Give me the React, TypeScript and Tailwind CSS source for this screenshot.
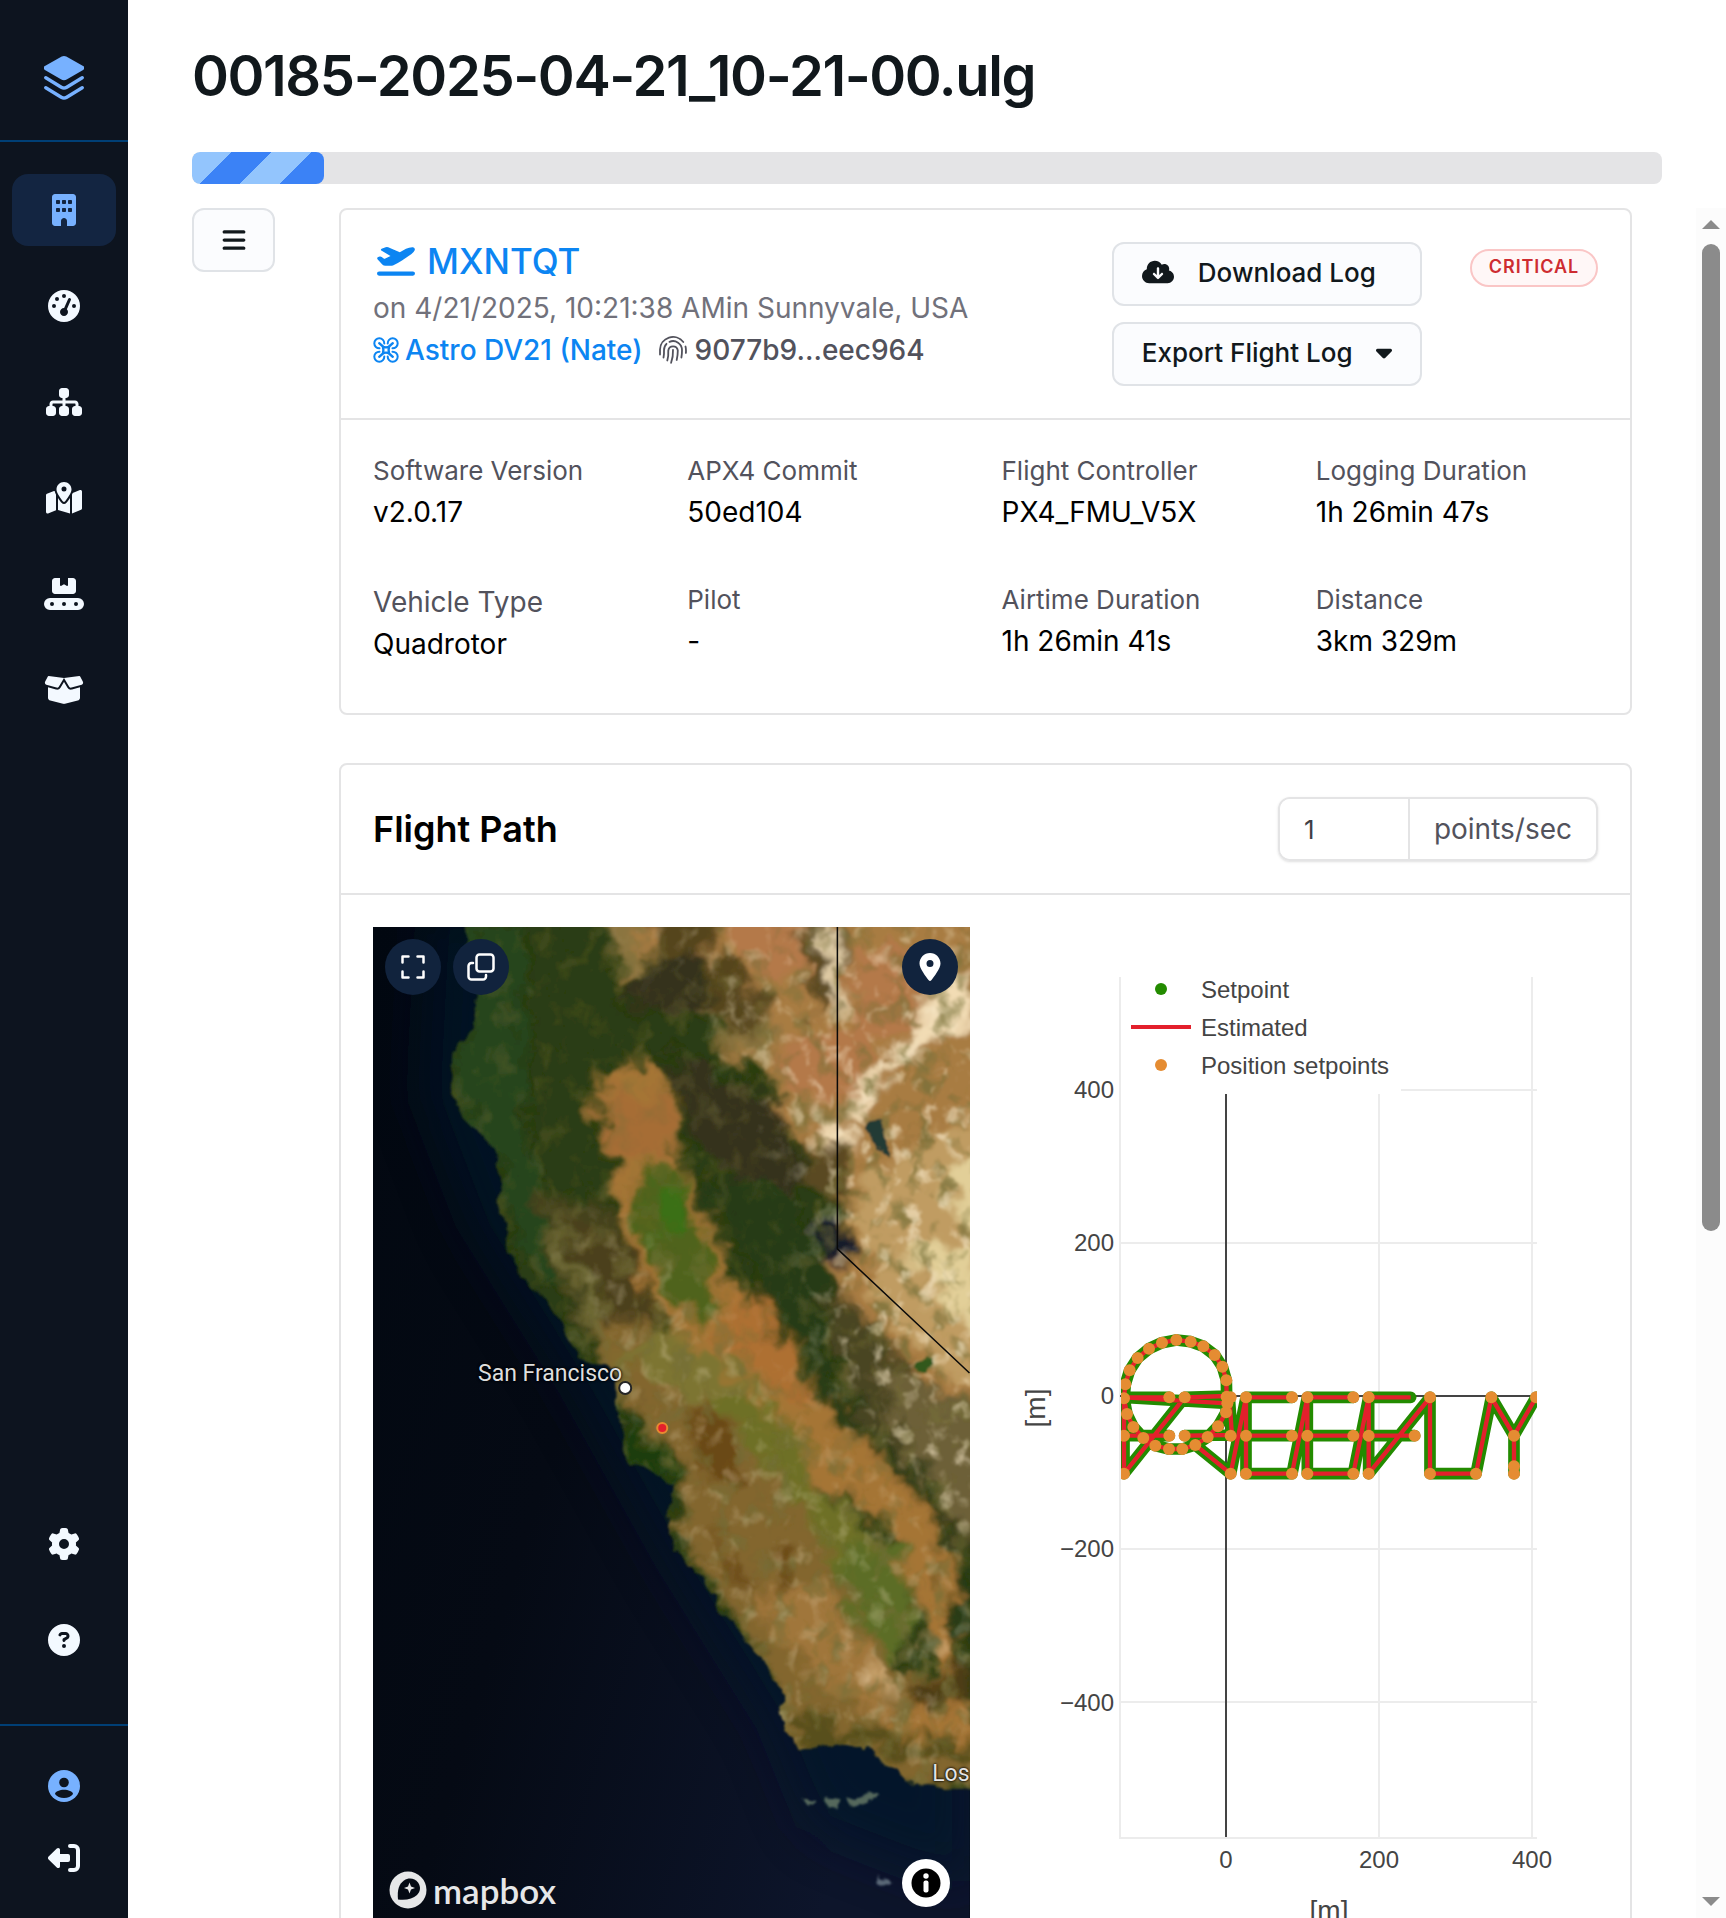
import type { ReactNode } from "react";
import {
  FaBars,
  FaBoxOpen,
  FaBuilding,
  FaCaretDown,
  FaCircleQuestion,
  FaCloudArrowDown,
  FaGaugeHigh,
  FaGear,
  FaLocationDot,
  FaMapLocationDot,
  FaSitemap,
} from "react-icons/fa6";

function LogoIcon() {
  return (
    <svg width="40" height="44" viewBox="0 0 40 44" fill="none" aria-hidden="true">
      <path
        d="M17.700.6a5 5 0 0 1 4.600 0l16.800 9.400a2.200 2.200 0 0 1 0 3.900l-16 9.300a6 6 0 0 1-6.200 0L.9 13.900a2.200 2.200 0 0 1 0-3.900z"
        fill="#77b1ff"
      />
      <path
        d="M1.800 21.700 17.300 31.200a5 5 0 0 0 5.400 0L38.200 21.700M1.800 31.700 17.300 41.200a5 5 0 0 0 5.400 0L38.200 31.700"
        stroke="#77b1ff"
        strokeWidth="3.400"
        strokeLinecap="round"
      />
    </svg>
  );
}

function ConveyorIcon() {
  return (
    <svg width="40" height="32" viewBox="0 0 640 512" fill="currentColor" aria-hidden="true">
      <path d="M176 0h80v112c0 12 12 19 22 12l42-26 42 26c10 7 22 0 22-12V0h80c26 0 48 22 48 48v160c0 26-22 48-48 48H176c-26 0-48-22-48-48V48c0-26 22-48 48-48z" />
      <path
        fillRule="evenodd"
        d="M96 320h448a96 96 0 0 1 0 192H96a96 96 0 0 1 0-192zm32 64a32 32 0 1 0 0 64 32 32 0 0 0 0-64zm192 0a32 32 0 1 0 0 64 32 32 0 0 0 0-64zm192 0a32 32 0 1 0 0 64 32 32 0 0 0 0-64z"
      />
    </svg>
  );
}

function UserIcon() {
  return (
    <svg width="32" height="32" viewBox="0 0 32 32" aria-hidden="true">
      <circle cx="16" cy="16" r="16" fill="#77b1ff" />
      <circle cx="16" cy="12.500" r="4.800" fill="#0d141f" />
      <path d="M7 24c0-2.600 5-4.200 9-4.200s9 1.600 9 4.200c-2 2.600-5 3.900-9 3.900S9 26.600 7 24z" fill="#0d141f" />
    </svg>
  );
}

function LogoutIcon() {
  return (
    <svg width="32" height="32" viewBox="0 0 32 32" fill="none" aria-hidden="true">
      <path
        d="M.6 14.600 8.800 6.500C10 5.300 12 6 12 7.800V12h8a2 2 0 0 1 2 2v4a2 2 0 0 1-2 2h-8v4.200c0 1.800-2 2.500-3.200 1.300L.6 17.400a2 2 0 0 1 0-2.800z"
        fill="currentColor"
      />
      <path d="M22 4h4a4 4 0 0 1 4 4v16a4 4 0 0 1-4 4h-4" stroke="currentColor" strokeWidth="4" strokeLinecap="round" />
    </svg>
  );
}

function TakeoffIcon() {
  return (
    <svg width="38" height="29" viewBox="0 0 38 29" fill="currentColor" aria-hidden="true">
      <path d="M4.600 1.800 8.600.3a3.500 3.500 0 0 1 2.600 0l11.600 4.900L29 1.800Q32.500 0 36 .2q2.400.6 1.700 3Q37 5 34.500 7L25 13.600q-4.500 3-9 4.800-1.400.4-3 .4H8.500q-2 0-3.200-1.300L.5 12.200Q-.4 10.600 1.200 10l1.600-.4q1-.2 1.900.4l2 1.500q.8.4 1.600 0L13.500 9 4.300 3.600q-1-1.100.3-1.800z" />
      <rect y="24.500" width="38" height="4.200" rx="2.100" />
    </svg>
  );
}

function DroneIcon() {
  return (
    <svg width="26" height="26" viewBox="0 0 26 26" fill="none" stroke="currentColor" strokeWidth="2" strokeLinecap="round" strokeLinejoin="round" aria-hidden="true">
      <path d="M11.300 6.500A5 5 0 1 0 6.500 11.300M14.700 6.500A5 5 0 1 1 19.500 11.300M11.300 19.500A5 5 0 1 1 6.500 14.700M14.700 19.500A5 5 0 1 0 19.500 14.700" />
      <path d="M6.200 6.200 10.500 10Q13 10.800 15.500 10L19.800 6.200M6.200 19.800 10.500 16Q13 15.200 15.500 16L19.800 19.800M10 10.500Q10.800 13 10 15.500M16 10.500Q15.200 13 16 15.500" strokeWidth="2.400" />
    </svg>
  );
}

function FingerprintIcon() {
  return (
    <svg width="28" height="28" viewBox="0 0 28 28" fill="none" stroke="currentColor" strokeWidth="1.800" strokeLinecap="round" aria-hidden="true">
      <path d="M1 18.500v-5a13 13 0 0 1 23.300-7.500M26.500 10.500q.7 2.500.4 6.500" />
      <path d="M4.500 21.500q.7-3 .5-7a9 9 0 0 1 2.500-6.700M10.500 5.800a9 9 0 0 1 12.500 8.500q0 4-.6 7.200" />
      <path d="M8.300 24.500q1.300-4.500 1-10a4.800 4.800 0 0 1 9.500 0q0 5-1.100 9.500" />
      <path d="M14 13.800q.3 7-1.900 13" />
    </svg>
  );
}

function NavLink({ label, active, children }: { label: string; active?: boolean; children: ReactNode }) {
  return (
    <a
      href="#"
      aria-label={label}
      className={
        active
          ? "flex h-[72px] items-center justify-center rounded-2xl bg-[#132541] text-[#77b1ff]"
          : "flex h-[72px] items-center justify-center rounded-2xl text-[#f3f9ff]"
      }
    >
      {children}
    </a>
  );
}

function Sidebar() {
  return (
    <aside className="flex w-32 shrink-0 flex-col bg-[#0d141f]">
      <a href="#" aria-label="Home" className="flex h-[142px] shrink-0 items-center justify-center border-b-2 border-[#003f75] pt-4">
        <LogoIcon />
      </a>
      <nav aria-label="Main" className="flex flex-1 flex-col gap-6 px-3 pt-8">
        <NavLink label="Organization" active><FaBuilding size={32} /></NavLink>
        <NavLink label="Dashboard"><FaGaugeHigh size={32} /></NavLink>
        <NavLink label="Fleet"><FaSitemap className="h-8 w-9" /></NavLink>
        <NavLink label="Missions"><FaMapLocationDot className="h-8 w-9" /></NavLink>
        <NavLink label="Production"><ConveyorIcon /></NavLink>
        <NavLink label="Packages"><FaBoxOpen className="h-8 w-10" /></NavLink>
      </nav>
      <nav aria-label="Support" className="flex flex-col gap-6 px-3 pb-12">
        <NavLink label="Settings"><FaGear size={32} /></NavLink>
        <NavLink label="Help"><FaCircleQuestion size={32} /></NavLink>
      </nav>
      <nav aria-label="Account" className="flex h-[194px] flex-col items-center gap-10 border-t-2 border-[#003f75] pt-11 text-[#f3f9ff]">
        <a href="#" aria-label="Profile"><UserIcon /></a>
        <a href="#" aria-label="Log out"><LogoutIcon /></a>
      </nav>
    </aside>
  );
}

function Field({ label, value, large }: { label: string; value: string; large?: boolean }) {
  return (
    <div>
      <dt className={large ? "text-[28px] leading-[42px] text-zinc-600" : "mb-0.5 text-[26px] leading-[37px] text-zinc-600"}>{label}</dt>
      <dd className="text-[28px] leading-[42px] text-black">{value}</dd>
    </div>
  );
}

function SummaryCard() {
  return (
    <section className="rounded-lg border-2 border-[#e4e4e5]">
      <header className="flex items-start border-b-2 border-[#e4e4e5] p-8">
        <div className="min-w-0 flex-1">
          <h2 className="mb-[7px] text-[35px] leading-[38px] font-medium text-[#0c85f2]">
            <a href="#" className="flex items-center gap-3 pl-1">
              <TakeoffIcon />
              MXNTQT
            </a>
          </h2>
          <p className="text-[28px] leading-[42px] text-zinc-500">on 4/21/2025, 10:21:38 AMin Sunnyvale, USA</p>
          <p className="flex items-center text-[28px] leading-[42px] font-medium">
            <a href="#" className="flex items-center gap-1.5 text-[#0c85f2]">
              <DroneIcon />
              Astro DV21 (Nate)
            </a>
            <span className="ml-4 flex items-center gap-2 text-zinc-600">
              <FingerprintIcon />
              9077b9...eec964
            </span>
          </p>
        </div>
        <div className="mr-12 flex w-[310px] flex-col gap-4">
          <button className="flex h-16 items-center gap-6 rounded-xl border-2 border-[#e0e3e7] bg-[#fbfcfe] px-7 pb-1 text-[26px] font-medium whitespace-nowrap text-[#11181c]">
            <FaCloudArrowDown className="h-[26px] w-8" />
            Download Log
          </button>
          <button className="flex h-16 items-center justify-between rounded-xl border-2 border-[#e0e3e7] bg-[#fbfcfe] px-7 pb-1 text-[26px] font-medium whitespace-nowrap text-[#11181c]">
            Export Flight Log
            <FaCaretDown className="h-[26px] w-4" />
          </button>
        </div>
        <span className="mt-[7px] flex h-[38px] items-center rounded-full border-2 border-[#fac6c6] bg-[#fff7f7] px-[17px] pb-0.5 text-lg font-semibold tracking-wider text-[#ce2c31]">
          CRITICAL
        </span>
      </header>
      <dl className="grid grid-cols-4 gap-x-8 gap-y-12 px-8 pt-8 pb-12">
        <Field label="Software Version" value="v2.0.17" />
        <Field label="APX4 Commit" value="50ed104" />
        <Field label="Flight Controller" value="PX4_FMU_V5X" />
        <Field label="Logging Duration" value="1h 26min 47s" />
        <Field label="Vehicle Type" value="Quadrotor" large />
        <Field label="Pilot" value="-" />
        <Field label="Airtime Duration" value="1h 26min 41s" />
        <Field label="Distance" value="3km 329m" />
      </dl>
    </section>
  );
}

const coast =
  "M94 0 92 33 104 70 100 96 81 133 77 166 98 196 121 223 131 256 127 283 133 306 139 336 164 366 191 396 207 430 238 440 244 460 246 494 256 532 277 549 304 556 295 597 300 625 328 649 343 676 370 707 398 745 407 762 407 782 415 810 429 824 464 817 499 824 522 841 534 858 557 858 620 868V-20H94z";

function SatelliteImage() {
  return (
    <svg className="absolute inset-0 h-full w-full" viewBox="0 0 596 992" preserveAspectRatio="xMidYMid slice" aria-hidden="true">
      <defs>
        <linearGradient id="sea" x1="0" y1="0" x2="1" y2="0.500">
          <stop offset="0" stopColor="#020811" />
          <stop offset="0.450" stopColor="#050a14" />
          <stop offset="1" stopColor="#0d152b" />
        </linearGradient>
        <linearGradient id="desertFade" gradientUnits="userSpaceOnUse" x1="250" y1="0" x2="480" y2="260">
          <stop offset="0" stopColor="#555" />
          <stop offset="1" stopColor="#fff" />
        </linearGradient>
        <filter id="shelf" x="-20%" y="-20%" width="140%" height="140%">
          <feGaussianBlur stdDeviation="26" />
        </filter>
        <filter id="rough" x="-10%" y="-10%" width="120%" height="120%">
          <feTurbulence type="fractalNoise" baseFrequency="0.045" numOctaves="4" seed="7" result="n" />
          <feDisplacementMap in="SourceGraphic" in2="n" scale="16" xChannelSelector="R" yChannelSelector="G" />
          <feGaussianBlur stdDeviation="1" />
        </filter>
        <filter id="terrain" x="-10%" y="-10%" width="120%" height="120%">
          <feGaussianBlur stdDeviation="5" result="b" />
          <feTurbulence type="fractalNoise" baseFrequency="0.035" numOctaves="5" seed="12" result="n" />
          <feDisplacementMap in="b" in2="n" scale="46" xChannelSelector="R" yChannelSelector="G" />
          <feGaussianBlur stdDeviation="1" />
        </filter>
        <filter id="darkGrain" x="0" y="0" width="100%" height="100%">
          <feTurbulence type="fractalNoise" baseFrequency="0.050 0.040" numOctaves="4" seed="3" />
          <feColorMatrix values="0 0 0 0 0.180  0 0 0 0 0.160  0 0 0 0 0.040  3.500 0 0 0 -1.750" />
        </filter>
        <filter id="lightGrain" x="0" y="0" width="100%" height="100%">
          <feTurbulence type="fractalNoise" baseFrequency="0.060 0.050" numOctaves="4" seed="21" />
          <feColorMatrix values="0 0 0 0 0.930  0 0 0 0 0.810  0 0 0 0 0.580  0 4 0 0 -2.200" />
        </filter>
        <clipPath id="land">
          <path d={coast} />
        </clipPath>
        <mask id="desertMask">
          <path d="M235 -10H620V620L560 600 500 500 462 440 440 360 462 300 430 240 395 190 340 130 335 80 320 30 260 40z" fill="url(#desertFade)" filter="url(#shelf)" />
        </mask>
        <mask id="southMask">
          <path d="M170 290 250 300 330 360 420 480 560 620 620 700V870H400L290 600 230 450z" fill="#fff" filter="url(#shelf)" />
        </mask>
      </defs>
      <rect width="596" height="992" fill="url(#sea)" />
      <path d="M60 -20 50 170 100 300 200 460 300 640 400 800 440 900 596 960V700L200 0z" fill="#06142a" filter="url(#shelf)" opacity="0.700" />
      <g filter="url(#rough)">
        <g transform="translate(-1 -1)">
          <path d={coast} fill="#2a3c12" />
          <g clipPath="url(#land)">
            <g filter="url(#terrain)">
              <path d="M94 0 92 33 104 70 81 133 77 166 98 196 131 256 150 336 190 366 160 220 150 110 160 0z" fill="#25441a" />
              <path d="M245 80 340 90 330 20 300 10zM290 130 400 170 430 250 400 300 320 210z" fill="#34301c" />
              <path d="M230 -20H620V640L580 560 540 480 500 460 470 400 452 340 478 320 470 250 410 200 405 160 345 120 345 40 300 10 250 60z" fill="#a87c42" />
              <path d="M235 -20 265 -20 265 50 245 40zM330 80 400 90 400 130 350 120z" fill="#8b7540" />
              <path d="M270 -20H345V20L300 30zM335 30 370 40 380 110 340 100z" fill="#55451f" />
              <path d="M350 -10H440L430 60 370 40zM410 110 520 90 480 180 420 170zM480 20 560 20 540 100 480 110z" fill="#b4794a" />
              <path d="M430 0 470 0 475 60 440 90zM360 60 400 70 390 110zM430 210 470 230 470 280 430 260z" fill="#5a4a22" />
              <path d="M480 260 620 180V480L560 430 500 370z" fill="#c09c62" />
              <path d="M430 180 480 205 480 230 460 225zM590 30 600 90 530 140 500 165 490 195 478 190 485 160 530 120 560 60zM448 0h10l16 70-12 10z" fill="#f2dcb4" />
              <path d="M575 240 620 220 620 320 580 290zM540 330 600 310 610 420 570 380z" fill="#e2cf98" />
              <path d="M450 350 530 430 620 520V640L520 560 470 460z" fill="#4a4420" />
              <path d="M500 440 620 480V620L580 590 530 520z" fill="#6d6038" />
              <path d="M340 260 400 250 450 330 450 450 560 560 600 700 570 720 490 520 410 400z" fill="#263a15" />
              <path d="M445 300 470 295 478 335 450 335z" fill="#151d2c" />
              <path d="M180 290 240 300 290 410 350 440 450 560 530 740 596 780 620 860H400L395 740 330 640 300 600 310 550 250 470 210 400z" fill="#83662e" />
              <path d="M160 270 240 280 265 390 205 400z" fill="#44431b" />
              <path d="M190 290 260 320 285 390 240 400z" fill="#4b411a" />
              <path d="M178 285 190 300 225 380 240 430 222 410 195 345z" fill="#6f6a35" />
              <path d="M222 165 270 130 300 160 303 225 335 275 350 330 368 370 400 380 425 450 480 500 540 560 575 620 580 690 596 740V830H500L560 740 520 600 440 560 360 470 320 440 285 380 265 340 245 290 235 220z" fill="#a57434" />
              <path d="M230 170 295 172 296 225 270 240 240 230z" fill="#a66d36" />
              <path d="M268 245 310 240 330 300 345 360 330 410 300 370 275 330 262 300z" fill="#50641a" />
              <path d="M285 260 310 265 315 300 285 310z" fill="#3b7018" />
              <path d="M350 370 395 375 420 430 450 480 400 460 355 430z" fill="#ae7030" />
              <path d="M240 430 300 410 370 450 400 500 330 480z" fill="#7d7430" />
              <path d="M380 460 425 510 450 570 520 620 535 700 520 740 480 660 430 590 395 540 340 480z" fill="#6e7028" />
              <path d="M470 620 530 620 540 690 520 740 480 690z" fill="#5c6d27" />
              <path d="M310 480 350 490 370 550 340 560zM400 620 430 640 410 660zM330 580 380 660 370 670z" fill="#6b4818" />
              <path d="M390 660 460 660 500 740 520 800 470 770 400 710z" fill="#a0763a" />
              <path d="M248 485 275 500 315 550 300 556 256 532z" fill="#1f3d10" />
              <path d="M410 790 450 790 520 810 600 810 600 835 430 825z" fill="#59501b" />
              <path d="M540 760 600 730 600 770 540 790z" fill="#4d3d16" />
              <path d="M485 720 520 760 530 775 505 760zM535 720 580 715 580 725z" fill="#d8b27c" />
            </g>
            <rect width="620" height="992" filter="url(#darkGrain)" opacity="0.300" />
            <g mask="url(#southMask)">
              <rect width="620" height="992" filter="url(#darkGrain)" opacity="0.600" />
              <rect width="620" height="992" filter="url(#lightGrain)" opacity="0.250" />
            </g>
            <g mask="url(#desertMask)">
              <rect width="620" height="992" filter="url(#darkGrain)" opacity="0.600" />
              <rect width="620" height="992" filter="url(#lightGrain)" opacity="0.650" />
            </g>
          </g>
        </g>
        <path d="M492 198q12-14 18 2 2 18 10 28-14-4-20-12z" fill="#243a35" />
        <path d="M540 433q10-10 18 2l-6 12q-10 2-12-14z" fill="#31581f" />
        <path d="M430 868l12 4-4 6zM452 872l18 2-4 10-12-2zM478 868l28 2-4 8-22-2z" fill="#54685c" />
        <path d="M504 948l12 8-6 4z" fill="#5a6877" />
      </g>
      <path d="M464 0V322L596 446" fill="none" stroke="#090909" strokeWidth="1.500" />
      <circle cx="252" cy="461" r="6" fill="#fff" stroke="#252525" strokeWidth="2" />
      <circle cx="289" cy="501" r="5" fill="#e4202c" stroke="#e88a30" strokeWidth="2" />
    </svg>
  );
}

function RoundButton({ label, children }: { label: string; children: ReactNode }) {
  return (
    <button aria-label={label} className="flex size-14 items-center justify-center rounded-full bg-[#11233d] text-white">
      {children}
    </button>
  );
}

function FlightMap() {
  return (
    <div className="relative h-[992px] overflow-hidden bg-[#040a14]">
      <SatelliteImage />
      <div className="absolute inset-x-3 top-3 flex gap-3">
        <RoundButton label="Full screen">
          <svg width="24" height="24" viewBox="0 0 24 24" fill="none" stroke="currentColor" strokeWidth="2.500" strokeLinecap="round" strokeLinejoin="round" aria-hidden="true">
            <path d="M1.500 7.500v-6h6M16.500 1.500h6v6M22.500 16.500v6h-6M7.500 22.500h-6v-6" />
          </svg>
        </RoundButton>
        <RoundButton label="Copy">
          <svg width="28" height="28" viewBox="0 0 28 28" fill="none" stroke="currentColor" strokeWidth="2.500" strokeLinecap="round" aria-hidden="true">
            <rect x="9.500" y="1.500" width="17" height="17" rx="3" />
            <path d="M6 10H4.500a3 3 0 0 0-3 3v10.500a3 3 0 0 0 3 3H16a3 3 0 0 0 3-3V22" />
          </svg>
        </RoundButton>
        <span className="flex-1" />
        <RoundButton label="Center on vehicle"><FaLocationDot size={28} /></RoundButton>
      </div>
      <span className="absolute top-[433px] left-[105px] font-[Roboto] text-[23px] leading-7 text-[#dedede] [text-shadow:0_0_3px_#000,0_0_2px_#000]">San Francisco</span>
      <span className="absolute top-[833px] right-0 font-[Roboto] text-[23px] leading-7 text-[#e4e4e4] [text-shadow:0_0_3px_#000,0_0_2px_#000]">Los</span>
      <a href="#" className="absolute bottom-2 left-4 flex items-center gap-1.5 text-[#e6e7e8]">
        <svg width="38" height="38" viewBox="0 0 38 38" aria-hidden="true">
          <circle cx="19" cy="19" r="18.500" fill="currentColor" />
          <path d="M9 28.500C8 19 10 13 15 9.500c5-3.500 11-2 14 2s2.500 9-1 12.500c-4 4-11 5.500-19 4.500z" fill="#040a14" />
          <path d="m20.500 11.500 1.500 4 4 1.500-4 1.500-1.500 4-1.500-4-4-1.500 4-1.500z" fill="currentColor" />
        </svg>
        <span className="font-[Lato] text-[35px] leading-[42px] font-semibold">mapbox</span>
      </a>
      <button aria-label="Attribution" className="absolute right-5 bottom-3 flex size-12 items-center justify-center rounded-full bg-white">
        <svg width="30" height="30" viewBox="0 0 30 30" aria-hidden="true">
          <circle cx="15" cy="15" r="14.500" />
          <circle cx="15" cy="8" r="2.700" fill="#fff" />
          <rect x="12.500" y="12.500" width="5" height="12" rx="2" fill="#fff" />
        </svg>
      </button>
    </div>
  );
}

const circlePoints: [number, number][] = [
  [76, 223], [89, 181], [113, 144], [147, 116], [186, 98], [229, 90], [272, 95], [310, 109],
  [344, 135], [367, 170], [379, 211], [380, 260], [378, 307], [354, 349], [323, 381], [286, 405],
  [247, 417], [207, 417], [166, 407], [130, 384], [100, 351], [81, 312], [72, 265],
];

const waypoints: [number, number][] = [
  [72, 377], [72, 491], [208, 262], [208, 377], [254, 262], [254, 377], [392, 262], [382, 280], [392, 377], [392, 491],
  [438, 262], [576, 262], [438, 377], [576, 377], [438, 491], [576, 491],
  [622, 262], [760, 262], [622, 377], [760, 377], [622, 491], [760, 491],
  [806, 262], [806, 377], [944, 377], [806, 491],
  [990, 262], [990, 491], [1128, 491], [1174, 262], [1242, 377], [1308, 262], [1242, 469], [1242, 491],
];

const track = [
  "M72 262H208M72 262 382 280M254 262 382 258M254 262 72 491V262M72 377H208M254 377 392 375M286 405 392 491 438 262M388 262 396 377",
  "M576 262H438V491H576L622 262M438 377H576",
  "M760 262H622V491H760L806 262M622 377H760",
  "M932 262H806V491L990 262V491H1128L1174 262 1242 377 1308 262M806 377H944M1242 377V491",
  "M" + circlePoints.map((p) => p.join(" ")).join("L") + "Z",
].join("");

function PathChart() {
  return (
    <svg
      className="h-[1040px] w-full font-['Liberation_Sans']"
      viewBox="0 0 596 1040"
      preserveAspectRatio="xMinYMin meet"
      role="img"
      aria-label="Flight path in metres"
      fill="#444"
      fontSize="24"
    >
      <path d="M118 50V912M377 167V912M530 50V912M399 163H535M118 316H535M118 622H535M118 775H535M117 911H535" stroke="#ececec" strokeWidth="2" fill="none" />
      <path d="M224 167V910M118 469H535" stroke="#444" strokeWidth="2" fill="none" />
      <svg x="98" y="383" width="437" height="200" viewBox="0 0 1311 600">
        <defs>
          <clipPath id="plot"><rect x="63" width="1248" height="600" /></clipPath>
        </defs>
        <g clipPath="url(#plot)">
          <path d={track} fill="none" stroke="#238b00" strokeWidth="35" strokeLinejoin="round" strokeLinecap="round" />
          <path d={track} fill="none" stroke="#e3202c" strokeWidth="13" strokeLinejoin="round" />
          {circlePoints.concat(waypoints).map(([x, y]) => (
            <circle key={`${x}-${y}`} cx={x} cy={y} r="18" fill="#e58c32" />
          ))}
        </g>
      </svg>
      <circle cx="159" cy="62" r="6" fill="#238b00" />
      <path d="M129 100H189" stroke="#e3202c" strokeWidth="4" />
      <circle cx="159" cy="138" r="6" fill="#e58c32" />
      <text x="199" y="71">Setpoint</text>
      <text x="199" y="109">Estimated</text>
      <text x="199" y="147">Position setpoints</text>
      <g textAnchor="end">
        <text x="112" y="171">400</text>
        <text x="112" y="324">200</text>
        <text x="112" y="477">0</text>
        <text x="112" y="630">−200</text>
        <text x="112" y="784">−400</text>
      </g>
      <g textAnchor="middle">
        <text x="224" y="941">0</text>
        <text x="377" y="941">200</text>
        <text x="530" y="941">400</text>
        <text x="327" y="993" fontSize="28">[m]</text>
        <text transform="translate(43 481) rotate(-90)" fontSize="28">[m]</text>
      </g>
    </svg>
  );
}

function FlightPathCard() {
  return (
    <section className="rounded-lg border-2 border-[#e4e4e5]">
      <header className="flex items-center justify-between border-b-2 border-[#e4e4e5] p-8">
        <h2 className="text-4xl font-semibold text-black">Flight Path</h2>
        <label className="flex h-16 w-80 overflow-hidden rounded-xl border-2 border-[#e4e4e5] shadow-sm">
          <input type="text" defaultValue="1" className="w-32 min-w-0 flex-1 bg-white px-6 text-[26px] text-zinc-700 outline-none" />
          <span className="flex items-center border-l-2 border-[#e4e4e5] px-6 text-[28px] text-zinc-600">points/sec</span>
        </label>
      </header>
      <div className="grid grid-cols-2 gap-8 p-8">
        <FlightMap />
        <PathChart />
      </div>
    </section>
  );
}

function ScrollTrack() {
  return (
    <div aria-hidden="true" className="flex w-[30px] shrink-0 flex-col items-center bg-[#fcfcfc] py-3">
      <svg width="18" height="9" viewBox="0 0 18 9"><path d="M9 0 18 9H0z" fill="#8b8b8b" /></svg>
      <div className="mt-[15px] mb-2 flex w-[18px] flex-1 flex-col">
        <div className="h-3/5 rounded-full bg-[#8b8b8b]" />
      </div>
      <svg width="18" height="9" viewBox="0 0 18 9"><path d="M0 0H18L9 9z" fill="#8b8b8b" /></svg>
    </div>
  );
}

export default function App() {
  return (
    <div className="flex h-screen overflow-hidden bg-white font-[Inter,sans-serif]">
      <Sidebar />
      <main className="flex min-w-0 flex-1 flex-col pl-16">
        <h1 className="pt-11 pb-11 text-[56px] leading-[64px] font-semibold tracking-tight text-[#11181c]">00185-2025-04-21_10-21-00.ulg</h1>
        <div role="progressbar" aria-label="Loading log" aria-valuenow={9} className="mr-16 mb-6 h-8 shrink-0 overflow-hidden rounded-lg bg-[#e4e4e6]">
          <div className="h-full w-[9%] rounded-lg bg-[linear-gradient(135deg,#93c5fd_25%,#3b82f6_25%,#3b82f6_50%,#93c5fd_50%,#93c5fd_75%,#3b82f6_75%)] bg-[size:80px_80px]" />
        </div>
        <div className="flex min-h-0 flex-1">
          <button aria-label="Sections" className="flex h-16 w-[83px] shrink-0 items-center justify-center rounded-xl border-2 border-[#e0e3e7] bg-[#fbfcfe] text-[#11181c]">
            <FaBars size={26} />
          </button>
          <div className="ml-16 flex min-w-0 flex-1 flex-col gap-12 overflow-hidden pr-16 *:shrink-0">
            <SummaryCard />
            <FlightPathCard />
          </div>
          <ScrollTrack />
        </div>
      </main>
    </div>
  );
}
